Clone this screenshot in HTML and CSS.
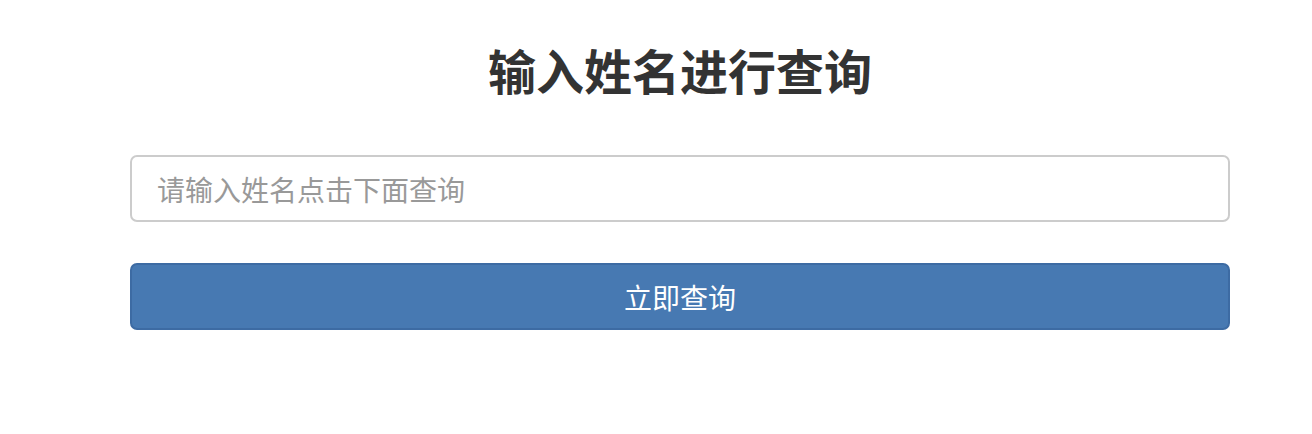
FILE: index.html
```html
<!DOCTYPE html>
<html lang="zh-CN">
<head>
<meta charset="utf-8">
<title>输入姓名进行查询</title>
<link rel="stylesheet" href="styles.css">
</head>
<body>
<div class="page">
  <h1 class="title">输入姓名进行查询</h1>
  <form class="form">
    <input class="name-input" type="text" placeholder="请输入姓名点击下面查询">
    <button class="submit" type="button">立即查询</button>
  </form>
</div>
</body>
</html>
```
FILE: styles.css
```css
html, body {
  margin: 0;
  padding: 0;
  background: #fff;
}
body {
  font-family: "Noto Sans CJK SC", "Noto Sans", sans-serif;
}
.page {
  width: 1100px;
  margin-left: 130px;
  padding-top: 36px;
}
.title {
  margin: 0;
  text-align: center;
  font-size: 48px;
  line-height: 66px;
  font-weight: 700;
  color: #333;
}
.form {
  display: flex;
  flex-direction: column;
  gap: 41px;
  margin-top: 53px;
}
.name-input {
  box-sizing: border-box;
  height: 67px;
  width: 100%;
  padding: 0 25px;
  border: 2px solid #ccc;
  border-radius: 7px;
  font-family: inherit;
  font-size: 28px;
  color: #555;
  outline: none;
}
.name-input::placeholder {
  color: #999;
}
.submit {
  box-sizing: border-box;
  height: 67px;
  width: 100%;
  border: 2px solid #3d6ba3;
  border-radius: 7px;
  background: #4779b2;
  color: #fff;
  font-family: inherit;
  font-size: 28px;
  cursor: pointer;
}
```
